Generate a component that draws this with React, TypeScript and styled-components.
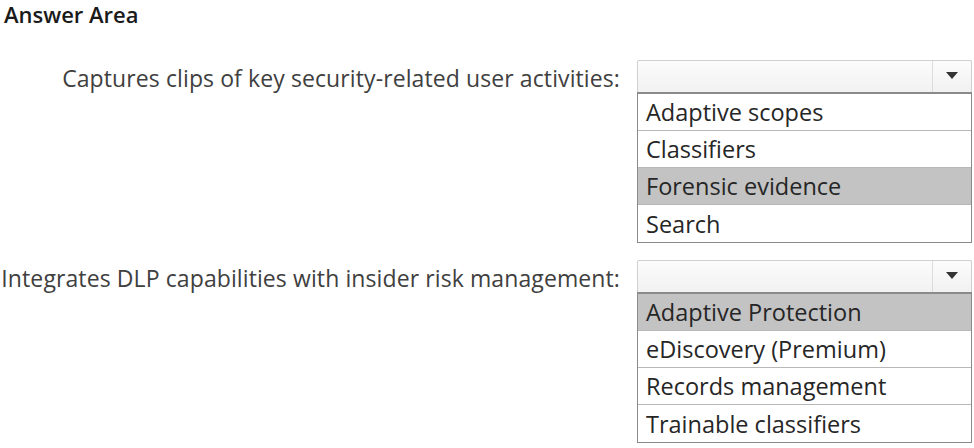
import styled, { createGlobalStyle } from "styled-components";

const GlobalStyle = createGlobalStyle`
    body {
        margin: 0;
        background: #ffffff;
        font-family: "Open Sans", "Noto Sans", sans-serif;
    }
`;

const Page = styled.div`
    width: 974px;
    height: 448px;
    overflow: hidden;
    padding-top: 1px;
    box-sizing: border-box;
`;

const Heading = styled.h1`
    margin: 0;
    padding: 0 0 0 4px;
    height: 59px;
    font-size: 22px;
    font-weight: 600;
    line-height: 26px;
    color: #1a1a1a;
`;

const Questions = styled.div`
    display: flex;
    flex-direction: column;
    gap: 17px;
`;

const QuestionRow = styled.div`
    display: flex;
    align-items: flex-start;
    gap: 17px;
`;

const Label = styled.div`
    width: 620px;
    flex: none;
    text-align: right;
    font-size: 23px;
    line-height: 36px;
    color: #404040;
    white-space: nowrap;
    letter-spacing: 0.1px;
`;

const Dropdown = styled.div`
    width: 335px;
    display: flex;
    flex-direction: column;
`;

const Select = styled.div`
    height: 32px;
    box-sizing: border-box;
    display: flex;
    border: 1px solid #cfcfcf;
    border-bottom: none;
    border-radius: 2px 2px 0 0;
    background: linear-gradient(#fcfcfc, #f1f1f1);
`;

const SelectValue = styled.div`
    flex: 1;
`;

const ArrowCell = styled.div`
    width: 38px;
    display: flex;
    align-items: center;
    justify-content: center;
    border-left: 1px solid #dcdcdc;
`;

const Arrow = styled.div`
    width: 0;
    height: 0;
    border-left: 6px solid transparent;
    border-right: 6px solid transparent;
    border-top: 7px solid #333;
    margin-top: -2px;
`;

const OptionList = styled.div`
    border: 1px solid #8a8a8a;
    border-top-width: 2px;
    background: #ffffff;
`;

const Option = styled.div<{ $selected?: boolean }>`
    height: 37px;
    box-sizing: border-box;
    padding-left: 8px;
    display: flex;
    align-items: center;
    font-size: 23.5px;
    color: #262626;
    background: ${({ $selected }) => ($selected ? "#c3c3c3" : "#ffffff")};
    border-bottom: 1px solid #b8b8b8;

    &:last-child {
        border-bottom: none;
    }
`;

interface Question {
    label: string;
    options: string[];
    selected: number;
}

const questions: Question[] = [
    {
        label: "Captures clips of key security-related user activities:",
        options: ["Adaptive scopes", "Classifiers", "Forensic evidence", "Search"],
        selected: 2,
    },
    {
        label: "Integrates DLP capabilities with insider risk management:",
        options: ["Adaptive Protection", "eDiscovery (Premium)", "Records management", "Trainable classifiers"],
        selected: 0,
    },
];

const App = () => {
    return (
        <Page>
            <GlobalStyle />
            <Heading>Answer Area</Heading>
            <Questions>
                {questions.map((q) => (
                    <QuestionRow key={q.label}>
                        <Label>{q.label}</Label>
                        <Dropdown>
                            <Select>
                                <SelectValue />
                                <ArrowCell>
                                    <Arrow />
                                </ArrowCell>
                            </Select>
                            <OptionList>
                                {q.options.map((opt, i) => (
                                    <Option key={opt} $selected={i === q.selected}>
                                        {opt}
                                    </Option>
                                ))}
                            </OptionList>
                        </Dropdown>
                    </QuestionRow>
                ))}
            </Questions>
        </Page>
    );
};

export default App;
